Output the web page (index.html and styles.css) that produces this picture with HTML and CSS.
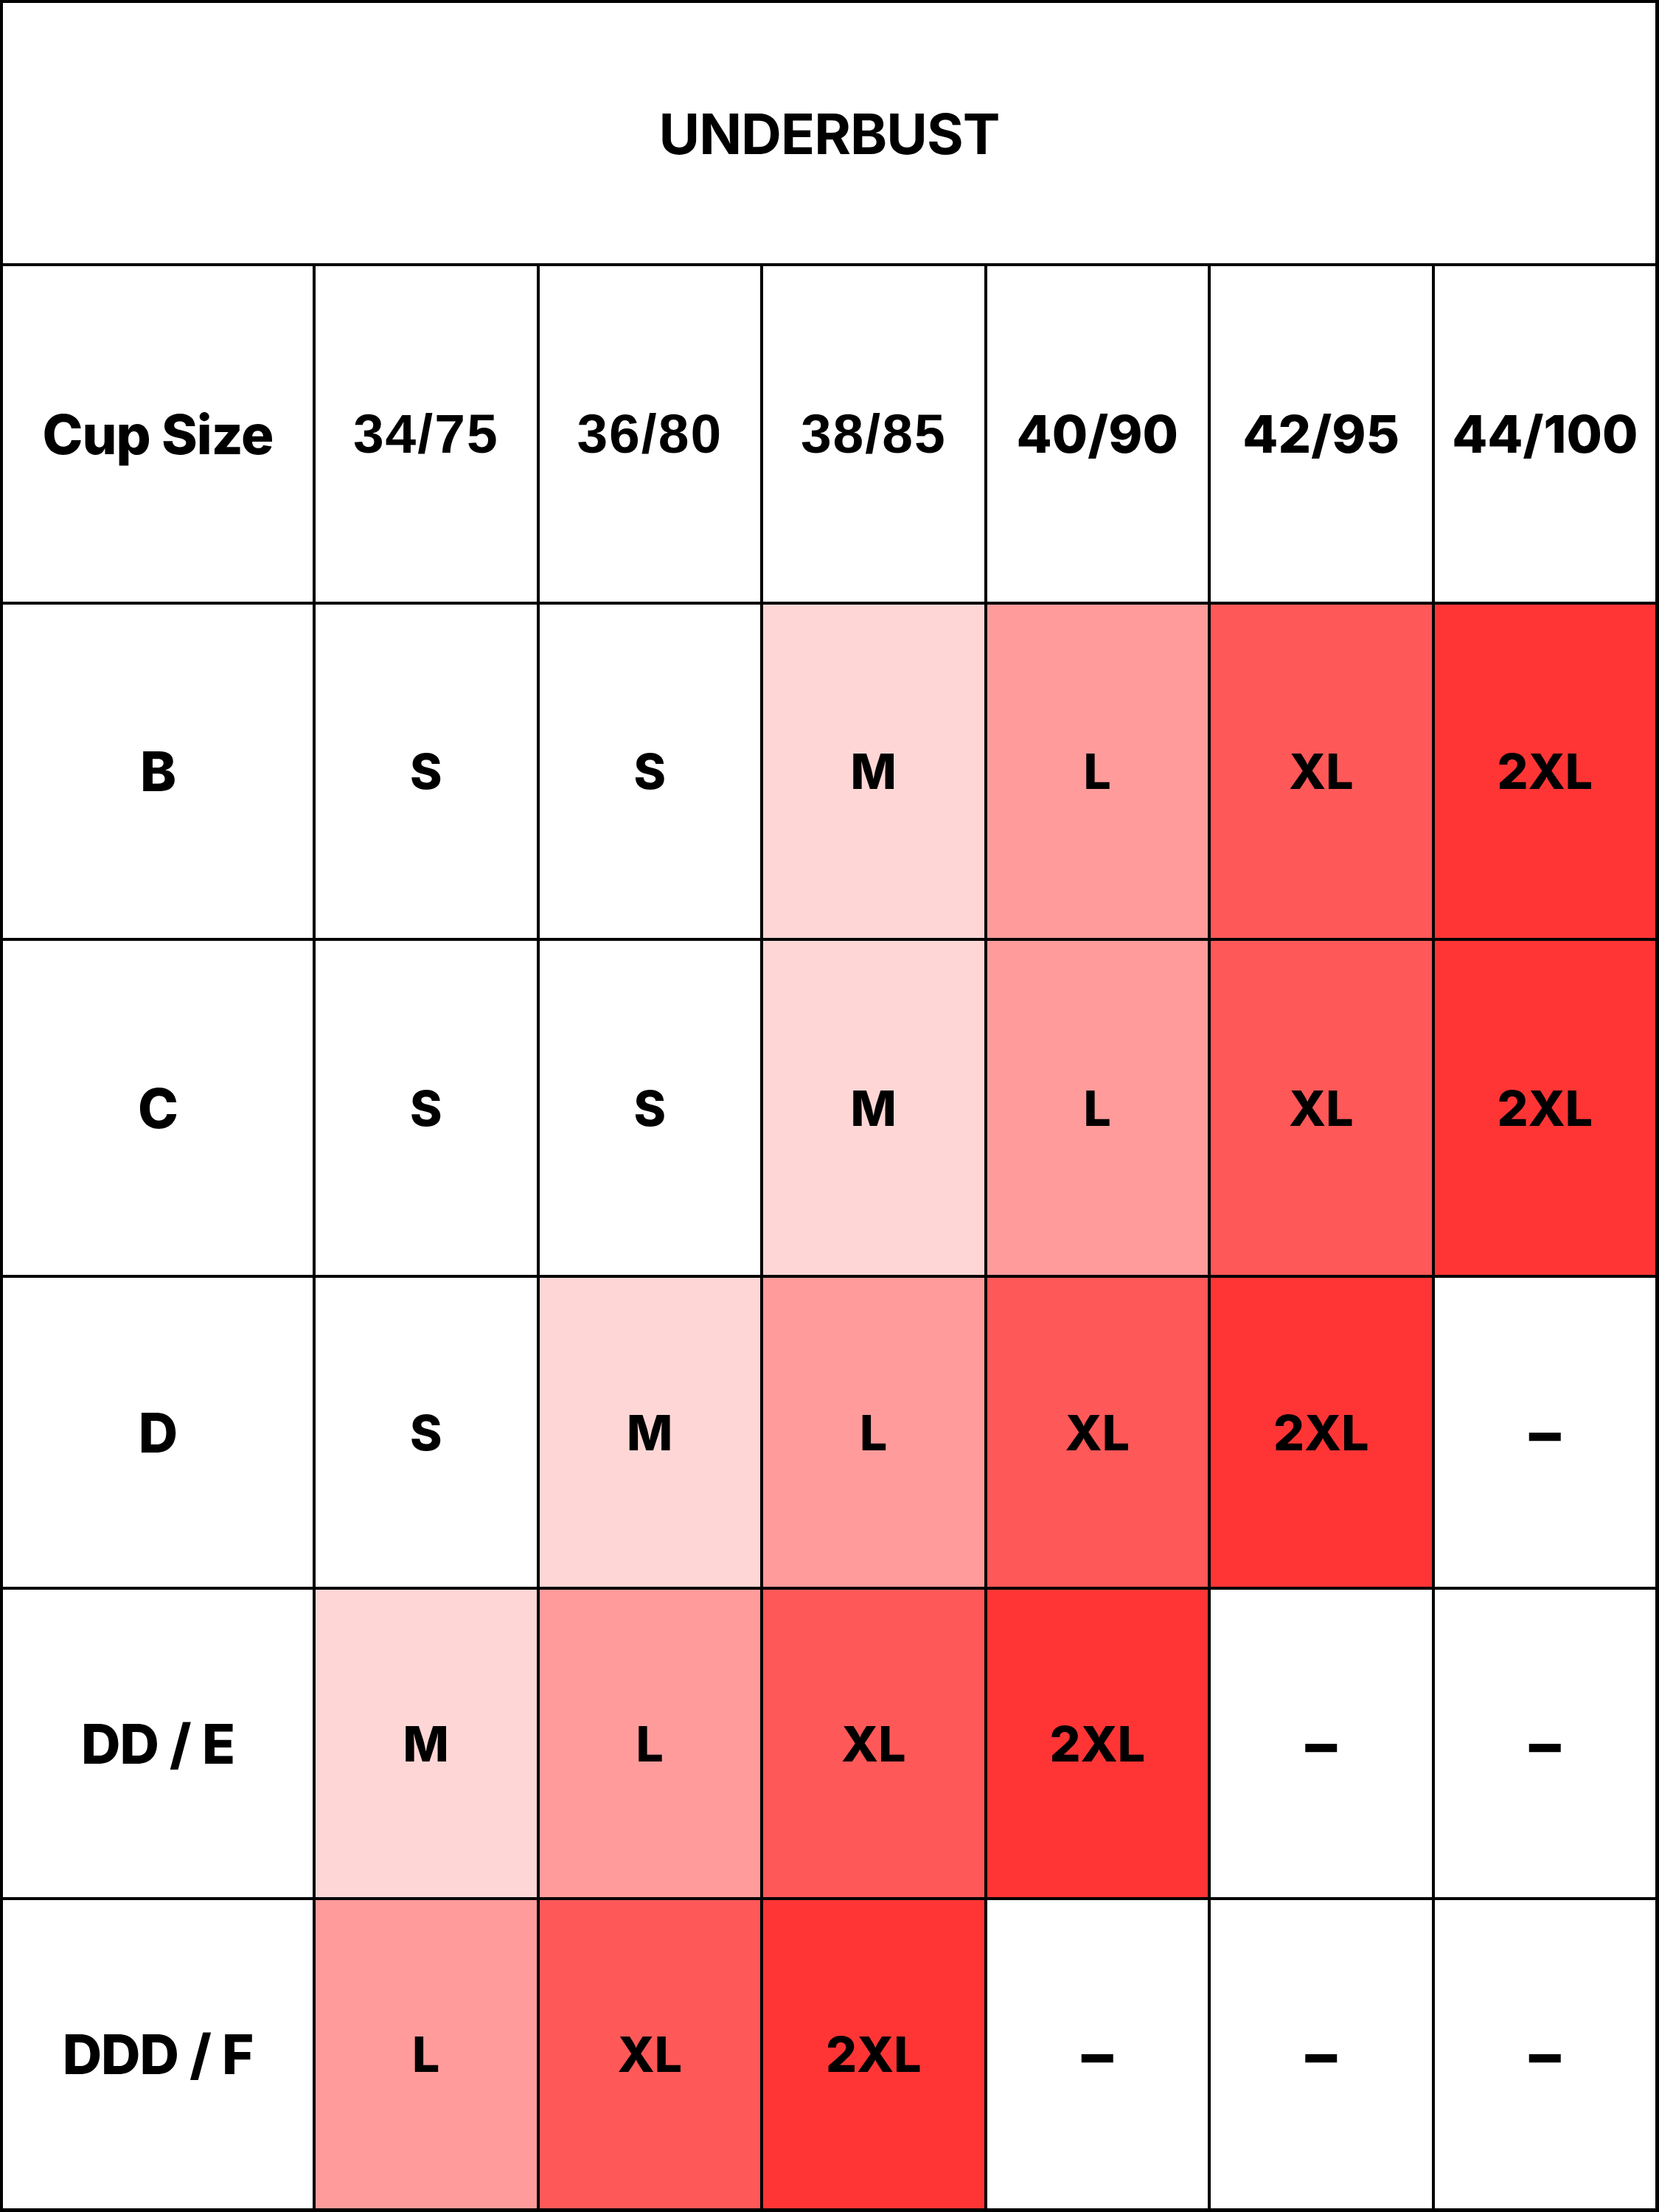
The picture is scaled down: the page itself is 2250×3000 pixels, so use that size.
FILE: index.html
```html
<!DOCTYPE html>
<html lang="en">
<head>
<meta charset="utf-8">
<title>Underbust size chart</title>
<link rel="stylesheet" href="styles.css">
</head>
<body>
<div class="chart">
  <div class="cell title">UNDERBUST</div>

  <div class="cell label">Cup Size</div>
  <div class="cell num arial">34/75</div>
  <div class="cell num arial">36/80</div>
  <div class="cell num arial">38/85</div>
  <div class="cell num">40/90</div>
  <div class="cell num">42/95</div>
  <div class="cell num">44/100</div>

  <div class="cell label">B</div>
  <div class="cell size">S</div>
  <div class="cell size">S</div>
  <div class="cell size t1">M</div>
  <div class="cell size t2">L</div>
  <div class="cell size t3">XL</div>
  <div class="cell size t4">2XL</div>

  <div class="cell label">C</div>
  <div class="cell size">S</div>
  <div class="cell size">S</div>
  <div class="cell size t1">M</div>
  <div class="cell size t2">L</div>
  <div class="cell size t3">XL</div>
  <div class="cell size t4">2XL</div>

  <div class="cell label">D</div>
  <div class="cell size">S</div>
  <div class="cell size t1">M</div>
  <div class="cell size t2">L</div>
  <div class="cell size t3">XL</div>
  <div class="cell size t4">2XL</div>
  <div class="cell size dash">–</div>

  <div class="cell label">DD / E</div>
  <div class="cell size t1">M</div>
  <div class="cell size t2">L</div>
  <div class="cell size t3">XL</div>
  <div class="cell size t4">2XL</div>
  <div class="cell size dash">–</div>
  <div class="cell size dash">–</div>

  <div class="cell label">DDD / F</div>
  <div class="cell size t2">L</div>
  <div class="cell size t3">XL</div>
  <div class="cell size t4">2XL</div>
  <div class="cell size dash">–</div>
  <div class="cell size dash">–</div>
  <div class="cell size dash">–</div>
</div>
</body>
</html>
```

FILE: styles.css
```css
html, body {
  margin: 0;
  padding: 0;
  background: #ffffff;
}

.chart {
  box-sizing: border-box;
  width: 2250px;
  height: 3000px;
  background: #000000;
  padding: 4px 5px 5px 4px;
  display: grid;
  grid-template-columns: 420px repeat(6, 1fr);
  grid-template-rows: 353px 455px 452px 453px 419px 417px 418px;
  gap: 4px;
  font-family: Inter, "Liberation Sans", sans-serif;
  font-weight: 800;
  color: #000000;
}

.cell {
  background: #ffffff;
  display: flex;
  align-items: center;
  justify-content: center;
  line-height: 1;
}

.title {
  grid-column: 1 / -1;
  font-size: 76px;
  font-weight: 700;
  letter-spacing: -1px;
}

.label {
  font-size: 74px;
  letter-spacing: -1px;
}

.num {
  font-size: 70px;
}

.num.arial {
  font-family: "Liberation Sans", Arial, sans-serif;
  font-weight: 700;
  font-size: 75px;
  letter-spacing: 2px;
}

.size {
  font-size: 66px;
}

.dash {
  font-size: 86px;
  font-weight: 800;
}

.t1 { background: #ffd6d6; }
.t2 { background: #ff9b9b; }
.t3 { background: #ff5858; }
.t4 { background: #ff3535; }
```
